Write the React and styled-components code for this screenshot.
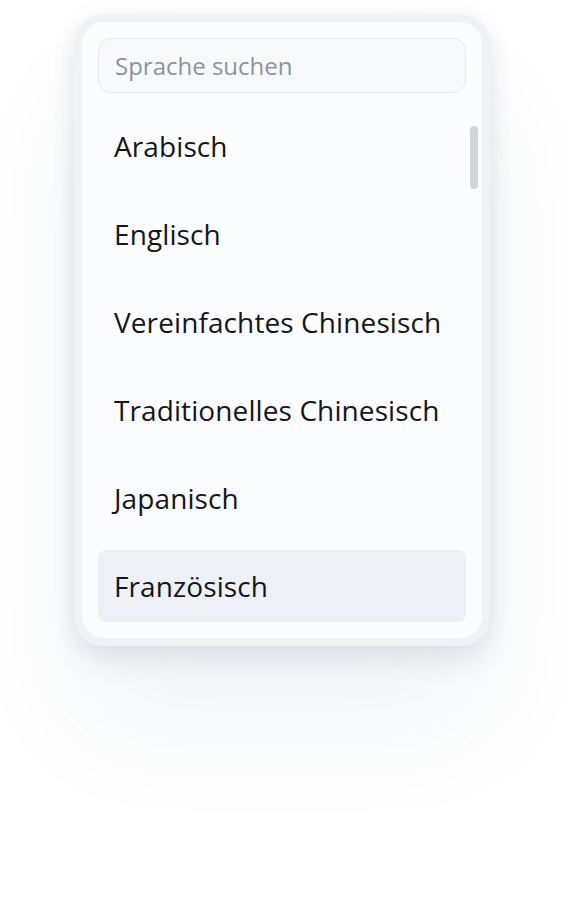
import React from 'react'
import styled, { createGlobalStyle } from 'styled-components'

const GlobalStyle = createGlobalStyle`
  html, body {
    margin: 0;
    padding: 0;
    background: #ffffff;
  }
  body {
    font-family: "Open Sans", "Noto Sans", sans-serif;
    -webkit-font-smoothing: antialiased;
  }
`

const Page = styled.div`
  width: 564px;
  height: 906px;
  padding-top: 14px;
  padding-left: 74px;
  box-sizing: border-box;
`

const Card = styled.div`
  position: relative;
  width: 416px;
  box-sizing: border-box;
  border: 8px solid #f0f2f5;
  border-radius: 30px;
  background: #fbfcfe;
  padding: 16px;
  display: flex;
  flex-direction: column;
  gap: 17px;
  box-shadow:
    0 80px 120px rgba(40, 60, 100, 0.06),
    0 16px 26px rgba(40, 60, 100, 0.09),
    0 0 30px rgba(40, 60, 100, 0.04);
`

const Search = styled.input`
  height: 55px;
  box-sizing: border-box;
  border: 1.5px solid #e6e9f0;
  border-radius: 13px;
  background: #f8f9fb;
  padding: 0 16px;
  font-family: inherit;
  font-size: 24px;
  color: #111;
  outline: none;

  &::placeholder {
    color: #8b93a3;
  }
`

const List = styled.ul`
  list-style: none;
  margin: 0;
  padding: 0;
  display: flex;
  flex-direction: column;
  gap: 16px;
  width: 368px;
`

const Item = styled.li`
  height: 72px;
  display: flex;
  align-items: center;
  padding-left: 16px;
  border-radius: 8px;
  font-size: 28px;
  letter-spacing: 0.1px;
  color: #14161a;
  background: ${p => (p.$active ? '#edf0f6' : 'transparent')};
`

/* scroll indicator drawn over the list's right edge */
const Thumb = styled.div`
  position: absolute;
  top: 104px;
  right: 4px;
  width: 8px;
  height: 63px;
  border-radius: 4px;
  background: #cfd3de;
`

const languages = [
  'Arabisch',
  'Englisch',
  'Vereinfachtes Chinesisch',
  'Traditionelles Chinesisch',
  'Japanisch',
  'Französisch',
]

export default function App() {
  return (
    <>
      <GlobalStyle />
      <Page>
        <Card>
          <Search placeholder="Sprache suchen" />
          <List>
            {languages.map(name => (
              <Item key={name} $active={name === 'Französisch'}>
                {name}
              </Item>
            ))}
          </List>
          <Thumb />
        </Card>
      </Page>
    </>
  )
}
